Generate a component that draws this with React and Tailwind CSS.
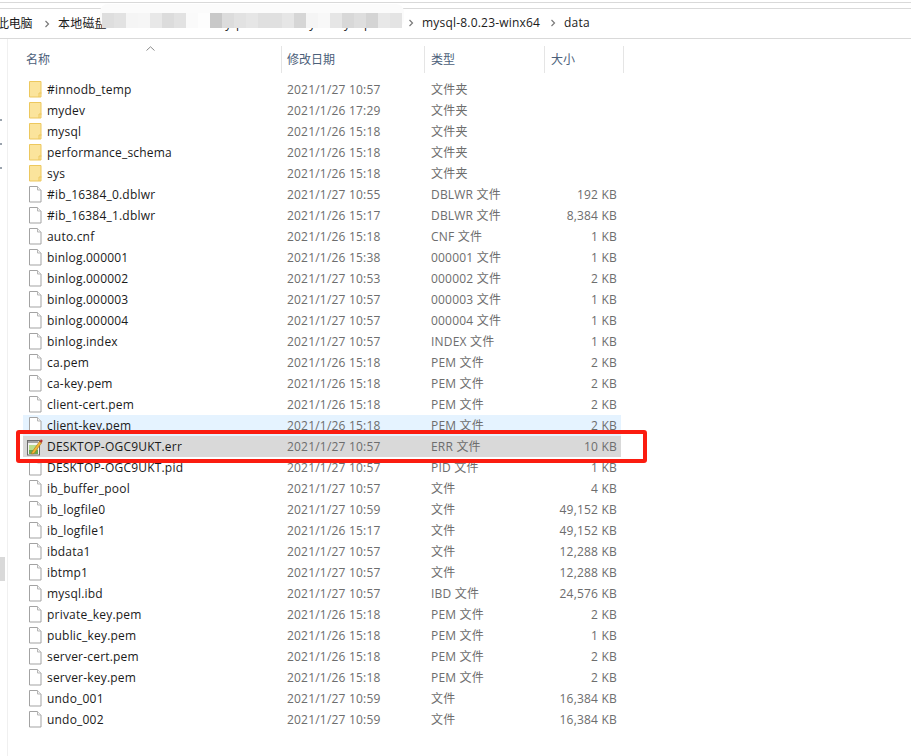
const rows = [
  ["#innodb_temp", "2021/1/27 10:57", "文件夹", "", "folder"],
  ["mydev", "2021/1/26 17:29", "文件夹", "", "folder"],
  ["mysql", "2021/1/26 15:18", "文件夹", "", "folder"],
  ["performance_schema", "2021/1/26 15:18", "文件夹", "", "folder"],
  ["sys", "2021/1/26 15:18", "文件夹", "", "folder"],
  ["#ib_16384_0.dblwr", "2021/1/27 10:55", "DBLWR 文件", "192 KB"],
  ["#ib_16384_1.dblwr", "2021/1/26 15:17", "DBLWR 文件", "8,384 KB"],
  ["auto.cnf", "2021/1/26 15:18", "CNF 文件", "1 KB"],
  ["binlog.000001", "2021/1/26 15:38", "000001 文件", "1 KB"],
  ["binlog.000002", "2021/1/27 10:53", "000002 文件", "2 KB"],
  ["binlog.000003", "2021/1/27 10:57", "000003 文件", "1 KB"],
  ["binlog.000004", "2021/1/27 10:57", "000004 文件", "1 KB"],
  ["binlog.index", "2021/1/27 10:57", "INDEX 文件", "1 KB"],
  ["ca.pem", "2021/1/26 15:18", "PEM 文件", "2 KB"],
  ["ca-key.pem", "2021/1/26 15:18", "PEM 文件", "2 KB"],
  ["client-cert.pem", "2021/1/26 15:18", "PEM 文件", "2 KB"],
  ["client-key.pem", "2021/1/26 15:18", "PEM 文件", "2 KB", "file", "hover"],
  ["DESKTOP-OGC9UKT.err", "2021/1/27 10:57", "ERR 文件", "10 KB", "err", "selected"],
  ["DESKTOP-OGC9UKT.pid", "2021/1/27 10:57", "PID 文件", "1 KB"],
  ["ib_buffer_pool", "2021/1/27 10:57", "文件", "4 KB"],
  ["ib_logfile0", "2021/1/27 10:59", "文件", "49,152 KB"],
  ["ib_logfile1", "2021/1/26 15:17", "文件", "49,152 KB"],
  ["ibdata1", "2021/1/27 10:57", "文件", "12,288 KB"],
  ["ibtmp1", "2021/1/27 10:57", "文件", "12,288 KB"],
  ["mysql.ibd", "2021/1/27 10:57", "IBD 文件", "24,576 KB"],
  ["private_key.pem", "2021/1/26 15:18", "PEM 文件", "2 KB"],
  ["public_key.pem", "2021/1/26 15:18", "PEM 文件", "1 KB"],
  ["server-cert.pem", "2021/1/26 15:18", "PEM 文件", "2 KB"],
  ["server-key.pem", "2021/1/26 15:18", "PEM 文件", "2 KB"],
  ["undo_001", "2021/1/27 10:59", "文件", "16,384 KB"],
  ["undo_002", "2021/1/27 10:59", "文件", "16,384 KB"],
];

const blur = [
  "bg-[#dedede]", "bg-[#e2e2e2]", "bg-[#f5f5f5]", "bg-[#f6f6f6]", "bg-[#e8e8e8]", "bg-[#dcdcdc]", "bg-[#e2e2e2]",
  "bg-[#fafafa]", "bg-[#fdfdfd]", "bg-[#c8c8c8]", "bg-[#dcdcdc]", "bg-[#e2e2e2]", "bg-[#e6e6e6]", "bg-[#e0e0e0]",
  "bg-[#e0e0e0]", "bg-[#e6e6e6]", "bg-[#d6d6d6]", "bg-[#f5f5f5]", "bg-[#f8f8f8]", "bg-[#e6e6e6]", "bg-[#d8d8d8]",
  "bg-[#dedede]", "bg-[#d4d4d4]", "bg-[#e8e8e8]", "bg-[#e4e4e4]",
];

const Chevron = () => (
  <svg width="6" height="8" viewBox="0 0 6 8" className="shrink-0" fill="none" stroke="#7a7a7a" strokeWidth="1.2">
    <path d="M1.500 1 L4.500 4 L1.500 7" />
  </svg>
);

const FolderIcon = () => (
  <svg width="13" height="17" viewBox="0 0 13 17" className="shrink-0">
    <path d="M.5.500h11.500v15.500H.500z" fill="#fbe49c" stroke="#edc85e" />
    <path d="M10 16v-4h2.500" fill="none" stroke="#edc85e" />
  </svg>
);

const FileIcon = () => (
  <svg width="13" height="17" viewBox="0 0 13 17" className="shrink-0">
    <path d="M.5.500h8l3.500 3.500v12H.500z" fill="#fff" stroke="#a3a3a3" />
    <path d="M8.500.500v3.500h3.500" fill="#f4f4f4" stroke="#b5b5b5" />
  </svg>
);

const ErrIcon = () => (
  <svg width="16" height="18" viewBox="0 0 16 18" className="shrink-0 -ml-[2px] -mr-[1px]">
    <rect x="0.500" y="2.500" width="12" height="14.500" fill="#f4f4f4" stroke="#6b6b6b" />
    <path d="M1 3h11v2H1z" fill="#d8d8d8" />
    <path d="M2 3v2M4 3v2M6 3v2M8 3v2M10 3v2" stroke="#555" strokeWidth="0.800" />
    <path d="M2 7h9v9H2z" fill="#b9dc8d" />
    <path d="M2 12h9v4H2z" fill="#6aa84f" />
    <path d="M5 14 L12.500 3.500 L14.500 5 L7 15.500 L4.500 16z" fill="#f2b632" stroke="#a9701a" strokeWidth="0.600" />
    <path d="M12.500 3.500 L14 1.300 L15.800 2.800 L14.500 5z" fill="#b8322a" />
  </svg>
);

const icons = { folder: FolderIcon, file: FileIcon, err: ErrIcon };

export default function App() {
  return (
    <div className="relative w-[911px] h-[756px] overflow-hidden bg-white text-[12px] tracking-[0.2px] font-['Open_Sans','Noto_Sans_CJK_SC',sans-serif]">
      <div className="h-px mt-[2px] bg-[#d9d9d9]" />
      <div className="relative h-[30px] mt-[5px] border-t border-[#d9d9d9] flex items-center text-[#1b1b1b]">
        <span className="-ml-[3px] w-[47px] shrink-0 -tracking-[0.2px]">此电脑</span>
        <Chevron />
        <span className="ml-[8px]">本地磁盘</span>
        <span className="absolute left-[214px] top-[6px] text-[#222222]">my</span>
        <span className="absolute left-[236px] top-[6px] text-[#222222]">p</span>
        <span className="absolute left-[298px] top-[6px] text-[#222222]">my</span>
        <span className="absolute left-[344px] top-[6px] text-[#222222]">y</span>
        <span className="absolute left-[364px] top-[6px] text-[#222222]">p</span>
        <span className="absolute left-[408px] top-[10px]"><Chevron /></span>
        <span className="absolute left-[422px] top-[5px]">mysql-8.0.23-winx64</span>
        <span className="absolute left-[550px] top-[10px]"><Chevron /></span>
        <span className="absolute left-[564px] top-[5px]">data</span>
        <div className="absolute left-[100px] -top-[5px] w-[304px] h-[24px] rounded-[8px] bg-[#fbfbfb] flex items-end pl-[2px]">
          {blur.map((c, i) => (
            <div key={i} className={`h-[15px] w-[12px] ${c}`} />
          ))}
        </div>
      </div>
      <div className="h-px bg-[#d9d9d9]" />

      <div className="relative flex">
        <div className="w-[8px] shrink-0 border-r border-[#f0f0f0] h-[717px] flex flex-col items-start">
          <div className="mt-[80px] w-[2px] h-[2px] bg-[#9aa3ad]" />
          <div className="mt-[22px] w-[2px] h-[2px] bg-[#9aa3ad]" />
          <div className="mt-[22px] w-[2px] h-[2px] bg-[#9aa3ad]" />
          <div className="mt-[388px] w-[5px] h-[24px] bg-[#d9d9d9]" />
        </div>

        <div className="w-[598px] ml-[15px] shrink-0">
          <div className="relative h-[40px] grid grid-cols-[258px_143px_120px_80px]">
            <svg width="9" height="5" viewBox="0 0 9 5" className="absolute left-[123px] top-[7px]" fill="none" stroke="#8a8a8a">
              <path d="M.5 4.500 L4.500 .800 L8.500 4.500" />
            </svg>
            {[
              ["名称", "pl-[3px]"],
              ["修改日期", "pl-[5px]"],
              ["类型", "pl-[6px]"],
              ["大小", "pl-[6px]"],
            ].map(([t, c], i) => (
              <div key={t} className={`${c} h-[27px] mt-[7px] flex items-center text-[#4c607a] tracking-normal ${i > 0 ? "border-l border-[#e5e5e5]" : ""} ${i === 3 ? "border-r" : ""}`}>
                {t}
              </div>
            ))}
          </div>

          <div className="flex flex-col">
            {rows.map(([name, date, type, size, kind = "file", state]) => {
              const Icon = icons[kind];
              const bg = state === "selected" ? "bg-[#d9d9d9]" : state === "hover" ? "bg-[#e5f3ff]" : "";
              return (
                <div key={name} className={`h-[21px] grid grid-cols-[264px_144px_1fr] items-center ${bg}`}>
                  <div className="flex items-center gap-[5px] pl-[6px] text-[#1a1a1a]">
                    <Icon />
                    <span className="whitespace-nowrap">{name}</span>
                  </div>
                  <div className="text-[#6d6d6d] whitespace-nowrap">{date}</div>
                  <div className="flex justify-between pr-[4px] text-[#6d6d6d] whitespace-nowrap">
                    <span>{type}</span>
                    <span>{size}</span>
                  </div>
                </div>
              );
            })}
          </div>
        </div>
      </div>

      <div className="absolute left-[16px] top-[430px] w-[631px] h-[33px] border-[4px] border-[#fb1c10] rounded-[3px]" />
    </div>
  );
}
